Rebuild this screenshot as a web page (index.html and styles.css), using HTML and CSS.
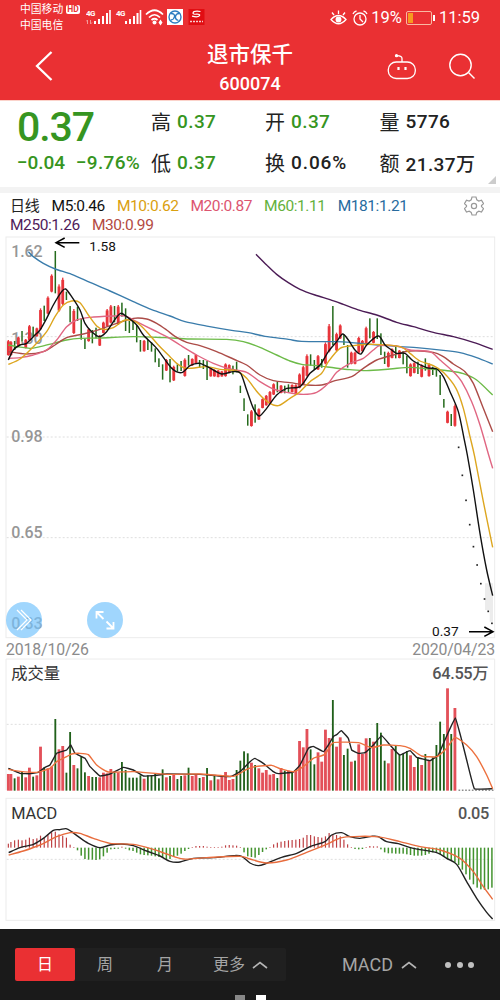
FILE: index.html
```html
<!DOCTYPE html>
<html lang="zh-CN">
<head>
    <meta charset="UTF-8">
    <meta name="viewport" content="width=device-width, initial-scale=1.0">
    <title>退市保千 600074</title>
    <link rel="stylesheet" href="styles.css">
</head>
<body>
    <header class="header">
        <div class="status">
            <div class="carriers">
                <div class="carrier">中国移动<span class="hd">HD</span></div>
                <div class="carrier">中国电信</div>
            </div>
            <svg class="status-icons" viewBox="0 0 126 24" width="126" height="24">
                <g fill="#fff">
                    <text x="0" y="9" class="net">4G</text>
                    <text x="30" y="9" class="net">4G</text>
                    <path d="M8 14h2v3h-2zM12 12h2v5h-2zM16 9h2v8h-2zM20 6h2v11h-2zM23.200 3h1.600v14h-1.600z"/>
                    <path d="M39 14h2v3h-2zM43 12h2v5h-2zM47 9h2v8h-2zM50.500 6h2v11h-2zM53.700 3h1.600v14h-1.600z"/>
                    <circle cx="68.500" cy="15.500" r="2"/>
                    <path d="M73 12.500l2 3h-4zM73 18.500l2-3h-4z" transform="translate(1.500 0)"/>
                </g>
                <path d="M1.500 13v4M0 14.500l1.500-1.500M4.500 17v-4M6 15.500l-1.500 1.500" stroke="#f39a9a" fill="none"/>
                <path d="M60 7.500Q68.500 -1 77 7.500M63 10.500Q68.500 5 74 10.500M65.500 13Q68.500 10.500 71.500 13" stroke="#fff" stroke-width="1.700" fill="none"/>
                <rect x="81" y="2" width="16" height="16" fill="#fff"/>
                <circle cx="89" cy="10" r="6" stroke="#2d7cc0" stroke-width="1.400" fill="none"/>
                <path d="M85 6.500q4 0 3.500 3t-3.500 3.500M93 6.500q-3 0-3.500 3t3 4" stroke="#2d7cc0" stroke-width="1.300" fill="none"/>
                <rect x="102.500" y="2" width="16" height="16" fill="#e10d12"/>
                <path d="M114.500 4.500q-7-1-7.500 1.500 0 1.500 3.500 1.200 4-.200 3 1.500-1.500 2-7.500.500" stroke="#fff" stroke-width="1.200" fill="none"/>
                <path d="M104 14.500h13" stroke="#fff" stroke-width="1.500" stroke-dasharray="2 1" opacity=".8"/>
            </svg>
            <div class="status-right">
                <svg viewBox="0 0 38 18" width="38" height="18" fill="none" stroke="#fff" stroke-width="1.300">
                    <path d="M1 10.500Q8.500 2.500 16 10.500Q8.500 19 1 10.500zM8.500 5V1.500M4 6L2 3.500M13 6l2-2.500"/>
                    <circle cx="8.500" cy="10.500" r="2.300" fill="#fff"/>
                    <circle cx="30" cy="10" r="6"/>
                    <path d="M30 6v4l3 3M23 5q1-2.500 3.500-3M37 5q-1-2.500-3.500-3"/>
                </svg>
                <span class="percent">19%</span>
                <span class="battery"></span>
                <span class="clock">11:59</span>
            </div>
        </div>
        <div class="nav">
            <svg class="back" viewBox="0 0 18 30" width="18" height="30"><path d="M16.500 1L2 15l14.500 14" fill="none" stroke="#fff" stroke-width="2.300"/></svg>
            <div class="title">
                <div class="name">退市保千</div>
                <div class="code">600074</div>
            </div>
            <div class="nav-icons">
                <svg viewBox="0 0 30 28" width="30" height="28" fill="none" stroke="#fff" stroke-width="1.300">
                    <rect x="1.300" y="9" width="27" height="16.500" rx="8" ry="7.500"/>
                    <path d="M15 9V5.500Q15 3 10 2.700"/>
                    <circle cx="9.500" cy="2.700" r="1" fill="#fff"/>
                    <path d="M11.500 14v3M18.500 14v3" stroke-width="2.200"/>
                </svg>
                <svg viewBox="0 0 28 28" width="28" height="28" fill="none" stroke="#fff" stroke-width="1.400">
                    <circle cx="12.500" cy="12" r="10.700"/>
                    <path d="M20.500 19.500l6 6"/>
                </svg>
            </div>
        </div>
    </header>

    <section class="quote">
        <div class="last">
            <div class="price">0.37</div>
            <div class="change"><span>−0.04</span><span class="pct">−9.76%</span></div>
        </div>
        <div class="stats">
            <div class="stat"><label>高</label><b class="down">0.37</b></div>
            <div class="stat"><label>开</label><b class="down">0.37</b></div>
            <div class="stat"><label>量</label><b>5776</b></div>
            <div class="stat"><label>低</label><b class="down">0.37</b></div>
            <div class="stat"><label>换</label><b class="rate">0.06%</b></div>
            <div class="stat"><label>额</label><b>21.37万</b></div>
        </div>
        <span class="corner"></span>
    </section>

    <section class="legend">
        <div class="ma-list">
            <span class="period">日线</span>
            <span class="m5">M5:0.46</span>
            <span class="m10">M10:0.62</span>
            <span class="m20">M20:0.87</span>
            <span class="m60">M60:1.11</span>
            <span class="m181">M181:1.21</span>
            <span class="m250">M250:1.26</span>
            <span class="m30">M30:0.99</span>
        </div>
        <svg class="gear" viewBox="0 0 20 20" width="20" height="20" fill="none" stroke="#999" stroke-width="1.200">
            <path d="M8 1h4l.8 2.800 2 1.200 2.700-.8 2 3.400-2 2v1l2 2-2 3.400-2.700-.8-2 1.200L12 19H8l-.8-2.600-2-1.200-2.700.8-2-3.400 2-2v-1l-2-2 2-3.400 2.700.8 2-1.200z"/>
            <circle cx="10" cy="10" r="2.600"/>
        </svg>
    </section>

    <!-- chart units are thirds of a pixel -->
    <section class="price-chart">
        <svg id="price" viewBox="0 0 1500 1212" width="500" height="404">
            <rect class="frame" x="18" y="6" width="1466" height="1202"/>
            <path class="grid" d="M20 305H1482M20 606H1482M20 908H1482"/>
            <path d="M1455 1045h24v115h-10v-35h-14z" fill="#ececec"/>
            <g class="axis">
                <text x="34" y="65">1.62</text>
                <text x="34" y="326">1.30</text>
                <text x="34" y="620">0.98</text>
                <text x="34" y="908">0.65</text>
                <text x="34" y="1183">0.33</text>
            </g>
            <g id="candles"></g>
            <g id="averages"></g>
            <g class="mark">
                <path d="M238 23H168M194 9L168 23l26 14M1407 1190h70M1453 1176l26 14-26 14"/>
                <text x="268" y="48">1.58</text>
                <text x="1296" y="1203">0.37</text>
            </g>
        </svg>
        <div class="float-btn next"><svg viewBox="0 0 36 36" width="36" height="36"><path d="M11 8l10 10-10 10M15 8l10 10-10 10"/></svg></div>
        <div class="float-btn expand"><svg viewBox="0 0 36 36" width="36" height="36"><path class="thick" d="M16.500 17L10 10.500M9.500 16.500v-6.500h7M19.500 19.500l6.500 6.500M26.500 20v6.500h-7"/></svg></div>
    </section>
    <div class="dates"><span>2018/10/26</span><span>2020/04/23</span></div>

    <section class="sub-chart">
        <svg id="volume" viewBox="0 24 1500 411" width="500" height="137">
            <path class="frame" d="M18 420V27H1484V420"/>
            <path class="grid" d="M20 223H1482"/>
            <text class="caption" x="34" y="88">成交量</text>
            <text class="value" x="1465" y="88" text-anchor="end">64.55万</text>
        </svg>
    </section>
    <section class="sub-chart">
        <svg id="macd" viewBox="0 0 1500 402" width="500" height="134">
            <rect class="frame" x="18" y="10" width="1466" height="366"/>
            <path class="grid" d="M20 193H1482"/>
            <text class="caption" x="34" y="71">MACD</text>
            <text class="value" x="1467" y="71" text-anchor="end">0.05</text>
        </svg>
    </section>

    <footer class="toolbar">
        <div class="tabs">
            <span class="tab active">日</span>
            <span class="tab">周</span>
            <span class="tab">月</span>
            <span class="tab more">更多<svg viewBox="0 0 16 8" width="16" height="8"><path d="M1 7l7-5.500L15 7"/></svg></span>
        </div>
        <span class="indicator">MACD<svg viewBox="0 0 16 8" width="16" height="8"><path d="M1 7l7-5.500L15 7"/></svg></span>
        <span class="dots"><i></i><i></i><i></i></span>
        <div class="pager"><i></i><i class="on"></i></div>
    </footer>

    <script src="chart.js"></script>
</body>
</html>
```
FILE: styles.css
```css
* { margin: 0; padding: 0; box-sizing: border-box; }
body { width: 500px; height: 1000px; overflow: hidden; background: #fff; color: #222; font-family: Roboto, "Noto Sans CJK SC", sans-serif; }
svg { display: block; flex: none; }

.header { height: 100px; background: #ea3033; color: #fff; }
.status { display: flex; height: 36px; padding: 2px 20px 0 20px; }
.carriers { width: 66px; font-size: 10.800px; line-height: 15.500px; white-space: nowrap; }
.carrier { display: flex; align-items: center; }
.hd { margin-left: 3px; padding: 0 1px; border-radius: 2px; background: #fff; color: #ea3033; font-size: 8.500px; font-weight: 700; line-height: 9px; }
.status-icons { margin-top: 5px; }
.net { font-size: 8px; font-weight: 700; letter-spacing: -0.500px; }
.status-right { display: flex; align-items: center; margin-left: auto; height: 31px; font-size: 16.500px; }
.percent { margin-left: 3px; }
.battery { position: relative; width: 26px; height: 14px; margin: 0 7px 0 4px; border: 1px solid #f9b9a2; border-radius: 2px; background: linear-gradient(90deg, #f79a20 5px, transparent 5px); background-origin: content-box; padding: 1px; background-repeat: no-repeat; }
.battery::after { content: ""; position: absolute; right: -4px; top: 3px; width: 2px; height: 6px; background: #fff; }
.nav { display: flex; justify-content: space-between; height: 64px; padding: 0 24px 0 35px; }
.back { margin-top: 15px; }
.title { padding: 5px 0 0 60px; text-align: center; }
.name { font-size: 21.500px; font-weight: 500; line-height: 28px; }
.code { font-size: 18px; font-weight: 500; line-height: 30px; }
.nav-icons { display: flex; gap: 31px; padding-top: 17px; }

.quote { position: relative; display: flex; height: 93px; border-bottom: 6px solid #f3f3f3; border-top: 1px solid #fbd3cb; }
.last { width: 151px; padding-left: 17px; color: #369521; font-weight: 500; white-space: nowrap; }
.price { font-size: 41px; line-height: 52px; letter-spacing: -1.100px; }
.change { display: flex; gap: 11px; font-size: 19px; line-height: 20px; letter-spacing: -0.100px; }
.pct { letter-spacing: 0.300px; }
.stats { display: grid; grid-template-columns: 114px 114.500px 1fr; grid-auto-rows: 41px; flex: 1; }
.stat { display: flex; align-items: center; font-size: 19px; white-space: nowrap; }
.stat label { width: 26px; font-size: 20px; }
.stat b { font-weight: 500; letter-spacing: 0.400px; }
.stat .down { color: #369521; }
.stat .rate { letter-spacing: 0.900px; }
.corner { position: absolute; right: 4px; bottom: 3px; border-left: 8px solid transparent; border-bottom: 8px solid #ccc; }

.legend { display: flex; justify-content: space-between; height: 42px; padding: 4px 16px 0 10px; font-size: 15.500px; line-height: 19px; }
.ma-list { display: flex; flex-wrap: wrap; width: 430px; column-gap: 12px; letter-spacing: -0.420px; align-content: flex-start; }
.period { font-size: 15px; letter-spacing: -0.200px; }
.m5 { color: #111; }
.m10 { color: #daa010; }
.m20 { color: #dc5570; }
.m60 { color: #64b13c; }
.m181 { color: #286b9e; }
.m250 { color: #501b5a; }
.m30 { color: #b34a42; }
.gear { margin-top: -1px; }

.price-chart { position: relative; height: 404px; }
.frame { fill: none; stroke: #ececec; stroke-width: 3; }
.grid { stroke: #dedede; stroke-width: 3; stroke-dasharray: 6 6; }
.axis { fill: #969696; font-size: 48px; font-weight: 500; letter-spacing: -0.500px; }
.mark path { fill: none; stroke: #000; stroke-width: 4.500; }
.mark text { fill: #111; font-size: 41px; }
.curve { fill: none; stroke-width: 4.200; stroke-linejoin: round; }
.float-btn { position: absolute; top: 367px; width: 36px; height: 36px; border-radius: 50%; background: rgba(115, 195, 252, .68); }
.float-btn path { fill: none; stroke: #fff; stroke-width: 1.300; }
.float-btn .thick { stroke-width: 1.800; }
.next { left: 6px; }
.expand { left: 87px; }
.dates { display: flex; justify-content: space-between; height: 19px; padding: 0 5px 0 6px; color: #8b8b8b; font-size: 15.800px; line-height: 21px; letter-spacing: -0.120px; }
.caption { fill: #333; font-size: 49px; letter-spacing: -0.500px; }
.value { fill: #555; font-size: 49px; font-weight: 500; letter-spacing: -1px; }

.toolbar { position: relative; display: flex; align-items: center; height: 71px; padding: 0 26px 0 15px; background: #1a1a1a; color: #a5a5a5; font-size: 18px; }
.toolbar svg path { fill: none; stroke: #b5b5b5; stroke-width: 1.600; }
.tabs { display: flex; width: 271px; height: 33px; border-radius: 2px; background: #202020; }
.tab { width: 60px; font-size: 16px; line-height: 34px; text-align: center; }
.active { border-radius: 2px; background: #ea3033; color: #fff; }
.more { display: flex; align-items: center; gap: 7px; width: 91px; padding-left: 18px; }
.indicator { display: flex; align-items: center; gap: 8px; margin-left: 56px; }
.dots { display: flex; gap: 5.500px; margin-left: auto; }
.dots i { width: 6px; height: 6px; border-radius: 50%; background: #c0c0c0; }
.pager { position: absolute; left: 235px; bottom: 0; display: flex; gap: 11px; }
.pager i { width: 10px; height: 5px; background: #888; }
.pager .on { background: #fff; }
```
FILE: chart.js
```js
const RED = '#e8353b';
const GREEN = '#256b1c';
const BAR_STEP = 11.1;

// r/g, top, bottom
const candles = `r315-362 r318-362 g318-345 r305-335 g288-320 r312-340 r270-318 g275-305 r278-305 r220-285
g212-258 r184-238 r118-172 g48-175 r148-230 r128-210 g170-195 g213-262 r222-297 g215-258
g250-314 g310-342 r280-320 g285-325 g278-310 r300-333 r260-295 r222-275 r210-265 g213-262
r210-270 g203-245 g220-288 g258-294 g255-285 g270-322 g315-350 r315-350 g315-345 g322-350
g340-382 g370-396 g388-434 r372-408 g372-442 r392-438 g388-410 g378-408 r370-425 g360-392
r370-392 r358-385 g375-398 g375-402 g378-435 r398-425 r403-425 r405-427 r408-425 r385-425
r388-415 g392-418 g380-412 g452-474 g490-528 g538-572 r525-575 g508-563 r520-555 r490-520
r480-512 r468-508 r445-480 g440-472 r450-475 g452-475 g448-474 r448-472 r448-480 r415-460
r392-450 r358-425 g358-392 g375-405 r360-405 g372-398 r322-388 r267-352 g213-330 r293-348
r268-312 g298-330 g330-398 r350-388 r350-388 r305-355 r315-350 r275-332 g250-310 r288-325
g250-312 g295-360 g350-387 r350-397 r340-370 g330-370 r345-370 g348-388 g362-415 r385-425
r382-415 g380-417 r388-427 g370-407 r385-425 g395-420 g400-425 g420-480 g492-518 r527-565
g537-573 r508-575`.split(/\s+/);
// one-price limit days
const limitDays = [637, 721, 796, 869, 935, 990, 1046, 1092, 1129, 1165];

const averages = [
    ['#3a7cab', '85,50 100,65 130,85 166,102 215,118 270,142 330,168 400,200 455,224 510,243 555,260 625,274 695,286 745,293 795,304 865,313 905,319 1005,320 1050,322 1110,328 1160,332 1250,338 1330,346 1380,353 1430,368 1478,387'],
    ['#4b1b55', '768,58 800,90 830,118 865,143 900,163 945,180 990,194 1030,208 1080,226 1130,240 1190,262 1240,275 1300,292 1360,305 1420,322 1478,343'],
    ['#6dbb49', '25,330 50,335 90,340 120,335 160,325 200,315 240,310 300,309 400,305 495,308 570,312 680,313 730,320 780,337 830,360 870,378 905,388 950,392 1005,399 1050,404 1100,407 1170,402 1230,397 1290,402 1350,408 1390,416 1430,435 1478,480'],
    ['#ac4c48', '25,350 80,357 130,350 165,330 200,308 250,297 300,283 350,265 400,250 440,252 470,265 500,285 525,304 560,322 600,332 650,350 700,372 740,390 780,420 820,437 870,443 920,450 965,450 1005,437 1055,425 1090,400 1130,375 1180,360 1230,348 1300,352 1330,365 1360,387 1395,410 1420,445 1450,520 1478,590'],
    ['#e06682', '25,370 60,368 100,360 140,345 170,315 200,275 230,255 270,247 340,243 375,243 410,260 460,285 505,308 540,330 590,360 640,385 690,402 740,412 780,440 820,462 860,472 910,478 950,472 985,445 1010,412 1050,385 1090,370 1120,345 1140,332 1190,333 1230,345 1290,350 1320,375 1360,410 1385,440 1415,500 1440,570 1466,660 1478,700'],
    ['#dda61f', '25,388 60,372 100,335 140,290 165,245 190,210 215,198 240,203 265,240 290,273 310,283 340,278 375,255 410,262 440,290 475,330 510,365 530,385 560,400 620,395 660,403 710,408 740,430 775,475 805,502 835,512 870,490 900,470 930,440 965,415 985,380 1020,340 1060,332 1120,328 1200,335 1230,355 1260,378 1300,392 1330,412 1368,460 1390,520 1410,605 1424,665 1450,800 1478,937'],
    ['#111', '25,375 40,345 60,330 80,325 105,300 120,285 140,250 160,210 185,170 197,162 215,185 240,225 255,265 275,290 297,305 320,290 345,253 362,235 380,245 410,270 430,300 470,340 515,400 545,413 570,392 600,385 640,405 665,417 700,410 722,415 740,465 760,520 778,543 800,520 830,480 860,460 900,455 930,415 960,390 985,350 1010,320 1028,297 1045,315 1065,345 1083,357 1100,330 1135,303 1155,330 1175,345 1190,355 1215,355 1240,378 1280,398 1310,402 1330,425 1350,470 1375,530 1392,610 1402,660 1420,765 1440,895 1460,1005 1478,1082']
];

const volumes = `r372 r372 g385 r380 g363 r382 r353 g380 r376 r290 g352 r355 r350 g207 r298 r288 g368 g246 r345 g355
g320 g367 r378 g381 g381 r382 r368 r370 r357 g367 r367 g336 g360 g383 g383 g383 g376 r386 g376 g376
g371 g385 g358 r382 g378 r372 g387 g378 r376 g353 r378 r374 g384 r381 g354 r391 g377 r388 r376 r366
r390 r387 g360 g332 g304 g310 r338 g345 r355 r368 r360 r374 r372 g384 r354 g362 r362 g366 r360 r273
r292 r237 g298 g343 r307 r335 r239 r264 g150 r290 r262 g315 g296 r335 g332 r283 r312 r265 g264 r275
g219 g248 g332 r340 r297 g288 g315 g312 g303 r316 r351 g322 r345 g312 r330 g322 g285 g215 g252 r115
g252 r174`.split(/\s+/);

const macd = [12, 17, 22, 24, 22, 24, 30, 26, 28, 36, 30, 40, 46, 48, 40, 36, 30, 9, 2, -8,
    -24, -34, -36, -36, -37, -35, -26, -15, -5, -4, -3, 3, -3, -8, -10, -15, -20, -22, -23, -24,
    -26, -28, -30, -34, -34, -28, -24, -18, -10, -4, 2, 5, 5, 5, 3, 2, 2, 2, 3, 7,
    8, 7, 6, 2, -14, -26, -28, -30, -22, -13, -5, 2, 10, 15, 18, 20, 22, 23, 24, 26,
    30, 38, 38, 34, 32, 30, 34, 44, 40, 38, 34, 24, 10, 2, -4, -5, -4, 2, 5, 4,
    4, -5, -14, -17, -17, -18, -18, -18, -20, -22, -24, -24, -24, -22, -18, -14, -14, -20, -26, -34,
    -40, -45, -52, -66, -80, -96, -110, -120, -125, -126, -125, -120];

const barX = (i) => Math.max(25, 21.7 + i * BAR_STEP);
const bar = (x, w, y1, y2, color) => `<rect x="${(x - w / 2).toFixed(1)}" y="${y1}" width="${w}" height="${y2 - y1}" fill="${color}"/>`;

// smooth = 0 gives straight segments
function curve(points, color, smooth = 1 / 7) {
    const p = points.split(' ').map(s => s.split(',').map(Number));
    let d = `M${p[0]}`;
    for (let i = 0; i < p.length - 1; i++) {
        const a = p[i - 1] || p[i], b = p[i], c = p[i + 1], e = p[i + 2] || c;
        d += `C${b[0] + (c[0] - a[0]) * smooth} ${b[1] + (c[1] - a[1]) * smooth} ${c[0] - (e[0] - b[0]) * smooth} ${c[1] - (e[1] - b[1]) * smooth} ${c}`;
    }
    return `<path class="curve" d="${d}" stroke="${color}"/>`;
}

let html = '';
candles.forEach((item, i) => {
    const [top, bottom] = item.slice(1).split('-').map(Number);
    if (item[0] === 'r') {
        const inset = (bottom - top) * 0.08;
        html += bar(barX(i), 4, top, bottom, RED) + bar(barX(i), 8.5, top + inset, bottom - inset / 2, RED);
    } else {
        html += bar(barX(i), 4.5, top, bottom, GREEN);
    }
});
limitDays.forEach((y, i) => {
    html += bar(barX(candles.length + i), 5, y - 2.5, y + 2.5, '#222');
});
document.getElementById('candles').innerHTML = html;
document.getElementById('averages').innerHTML = averages.map(([color, points]) => curve(points, color)).join('');

html = '';
volumes.forEach((item, i) => {
    const red = item[0] === 'r';
    html += bar(barX(i), red ? 8.5 : 5.5, Number(item.slice(1)), 422, red ? '#e35059' : '#20601a');
});
for (let x = 1378; x < 1480; x += 10) {
    html += bar(x, 5, 419, 422, '#555');
}
html += curve('25,355 60,370 90,371 115,367 135,352 150,345 170,310 200,300 212,285 225,310 255,325 270,350 300,378 330,372 370,352 400,360 430,378 460,377 500,372 600,373 690,380 720,365 750,335 765,325 790,340 820,365 835,371 880,366 900,345 925,295 940,289 970,305 985,285 1000,260 1010,254 1024,242 1045,265 1055,300 1075,310 1095,308 1120,285 1145,257 1170,285 1185,302 1200,315 1230,302 1250,322 1290,332 1315,315 1340,258 1366,204 1385,270 1400,330 1423,416 1478,416', '#222', 0.04);
html += curve('25,358 60,364 110,367 150,355 170,335 200,320 215,312 240,310 265,314 290,345 325,366 400,365 500,373 600,372 700,379 740,358 765,350 815,346 840,356 880,365 910,350 940,325 975,313 1000,278 1075,278 1115,293 1150,285 1200,287 1230,295 1265,318 1310,320 1340,295 1365,262 1400,285 1430,320 1460,375 1478,416', '#ed713e', 0.08);
document.getElementById('volume').insertAdjacentHTML('beforeend', html);

html = '';
macd.forEach((v, i) => {
    html += v > 0 ? bar(barX(i), 3.5, 158 - v, 158, '#bd3d40') : bar(barX(i), 4.5, 158, 158 - v, '#43932f');
});
html += curve('26,173 60,158 100,148 130,130 160,106 180,104 198,101 215,110 235,125 265,145 300,158 330,150 365,147 400,152 440,168 480,183 510,199 540,201 580,190 640,188 700,182 725,184 750,204 775,212 800,205 845,187 890,175 930,155 975,140 995,120 1025,113 1050,125 1080,130 1115,124 1135,125 1160,140 1195,146 1240,160 1310,173 1340,190 1370,208 1400,260 1430,310 1460,352 1478,372', '#222');
html += curve('26,180 70,168 120,150 170,125 210,113 240,115 280,130 330,145 400,148 460,163 500,177 550,192 620,188 720,184 750,192 800,204 860,195 920,172 980,148 1030,127 1130,125 1200,140 1260,155 1320,165 1380,190 1420,230 1450,275 1478,313', '#e86c3d');
document.getElementById('macd').insertAdjacentHTML('beforeend', html);
```
